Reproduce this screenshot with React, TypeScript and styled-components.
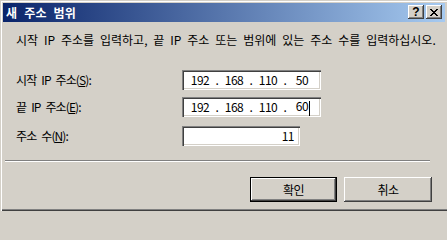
import React from "react";
import styled, { createGlobalStyle } from "styled-components";

const FONT = `"Noto Sans CJK KR", "Liberation Sans", sans-serif`;

const Global = createGlobalStyle`
  html, body { margin: 0; padding: 0; background: #d4d0c8; }
  body { width: 447px; height: 211px; overflow: hidden; }
`;

const Window = styled.div`
  box-sizing: border-box;
  width: 447px;
  height: 211px;
  background: #d4d0c8;
  padding: 3px 2px 2px 3px;
  display: flex;
  flex-direction: column;
  box-shadow: inset 1px 1px 0 #d4d0c8, inset 2px 2px 0 #ffffff,
    inset 0 -1px 0 #404040, inset 0 -2px 0 #808080;
  font-family: ${FONT};
  font-size: 12px;
  color: #000;
`;

const TitleBar = styled.div`
  height: 19px;
  flex: none;
  display: flex;
  align-items: flex-start;
  padding: 0 3px 0 3px;
  background: linear-gradient(to right, #0a246a, #a6caf0);
`;

const Title = styled.div`
  flex: 1;
  color: #fff;
  font-weight: bold;
  font-size: 12px;
  line-height: 19px;
  letter-spacing: 0.2px;
  word-spacing: 4px;
  white-space: nowrap;
`;

const CaptionButton = styled.div<{ $gap?: number }>`
  box-sizing: border-box;
  width: 16px;
  height: 14px;
  margin-top: 2px;
  margin-left: ${(p) => p.$gap ?? 0}px;
  background: #d4d0c8;
  display: flex;
  align-items: center;
  justify-content: center;
  box-shadow: inset -1px -1px 0 #404040, inset 1px 1px 0 #ffffff,
    inset -2px -2px 0 #808080, inset 2px 2px 0 #d4d0c8;
  font-family: "Liberation Sans", sans-serif;
  font-weight: bold;
  font-size: 12px;
  line-height: 14px;
  color: #000;
`;

const Body = styled.div`
  flex: 1;
  display: flex;
  flex-direction: column;
`;

const Description = styled.div`
  margin: 12px 0 0 13px;
  height: 12px;
  line-height: 12px;
  white-space: nowrap;
  letter-spacing: 0;
  word-spacing: 3.2px;
`;

const Form = styled.div`
  margin: 24px 0 0 13px;
  display: flex;
  flex-direction: column;
`;

const Field = styled.div<{ $top: number }>`
  display: grid;
  grid-template-columns: 166px auto;
  align-items: center;
  margin-top: ${(p) => p.$top}px;
`;

const Label = styled.label`
  white-space: nowrap;
  letter-spacing: -0.9px;
  word-spacing: 3.2px;
  line-height: 14px;
  & u { text-decoration: underline; text-underline-offset: 1px; }
`;

const TextBox = styled.div<{ $w: number; $right?: boolean }>`
  box-sizing: border-box;
  width: ${(p) => p.$w}px;
  height: 20px;
  background: #fff;
  box-shadow: inset 1px 1px 0 #808080, inset 2px 2px 0 #404040,
    inset -1px -1px 0 #ffffff, inset -2px -2px 0 #d4d0c8;
  display: flex;
  align-items: center;
  justify-content: ${(p) => (p.$right ? "flex-end" : "flex-start")};
  padding: ${(p) => (p.$right ? "0 6px 0 0" : "0 0 0 4px")};
  line-height: 16px;
  letter-spacing: -0.5px;
`;

const Octet = styled.span`
  width: 28px;
  text-align: center;
  white-space: nowrap;
`;

const Dot = styled.span`
  width: 6px;
  text-align: center;
`;

const Caret = styled.span`
  display: inline-block;
  width: 1px;
  height: 15px;
  margin-left: 1px;
  margin-right: -2px;
  background: #000;
  vertical-align: middle;
`;

const Separator = styled.div`
  margin: 14px 0 0 2px;
  width: 425px;
  height: 1px;
  background: #808080;
  border-bottom: 1px solid #ffffff;
`;

const ButtonRow = styled.div`
  margin-top: 15px;
  display: flex;
  justify-content: flex-end;
  gap: 7px;
  padding-right: 13px;
`;

const Button = styled.button<{ $default?: boolean; $w: number }>`
  box-sizing: border-box;
  width: ${(p) => p.$w}px;
  height: 25px;
  margin: 0;
  padding: 0;
  background: #d4d0c8;
  font-family: ${FONT};
  font-size: 12px;
  color: #000;
  letter-spacing: -0.5px;
  border: ${(p) => (p.$default ? "1px solid #000" : "none")};
  box-shadow: ${(p) =>
    p.$default
      ? "inset -1px -1px 0 #404040, inset 1px 1px 0 #ffffff, inset -2px -2px 0 #808080"
      : "inset -1px -1px 0 #404040, inset 1px 1px 0 #ffffff, inset -2px -2px 0 #808080, inset 2px 2px 0 #d4d0c8"};
`;

const CloseGlyph = () => (
  <svg width="8" height="7" viewBox="0 0 8 7" shapeRendering="crispEdges">
    <path
      d="M0 0h2v1h-2z M1 1h2v1h-2z M2 2h2v1h-2z M3 3h2v1h-2z M2 4h2v1h-2z M1 5h2v1h-2z M0 6h2v1h-2z M6 0h2v1h-2z M5 1h2v1h-2z M4 2h2v1h-2z M4 4h2v1h-2z M5 5h2v1h-2z M6 6h2v1h-2z"
      fill="#000"
    />
  </svg>
);

const IpAddress = ({ parts, caret }: { parts: string[]; caret?: boolean }) => (
  <TextBox $w={139}>
    {parts.map((p, i) => (
      <React.Fragment key={i}>
        <Octet>
          {p}
          {caret && i === parts.length - 1 ? <Caret /> : null}
        </Octet>
        {i < parts.length - 1 ? <Dot>.</Dot> : null}
      </React.Fragment>
    ))}
  </TextBox>
);

export default function App() {
  return (
    <>
      <Global />
      <Window>
        <TitleBar>
          <Title>새 주소 범위</Title>
          <CaptionButton>?</CaptionButton>
          <CaptionButton $gap={2}>
            <CloseGlyph />
          </CaptionButton>
        </TitleBar>
        <Body>
          <Description>
            시작 IP 주소를 입력하고, 끝 IP 주소 또는 범위에 있는 주소 수를 입력하십시오.
          </Description>
          <Form>
            <Field $top={0}>
              <Label>
                시작 IP 주소(<u>S</u>):
              </Label>
              <IpAddress parts={["192", "168", "110", "50"]} />
            </Field>
            <Field $top={7}>
              <Label>
                끝 IP 주소(<u>E</u>):
              </Label>
              <IpAddress parts={["192", "168", "110", "60"]} caret />
            </Field>
            <Field $top={9}>
              <Label>
                주소 수(<u>N</u>):
              </Label>
              <TextBox $w={118} $right>
                11
              </TextBox>
            </Field>
          </Form>
          <Separator />
          <ButtonRow>
            <Button $default $w={87}>
              확인
            </Button>
            <Button $w={88}>취소</Button>
          </ButtonRow>
        </Body>
      </Window>
    </>
  );
}
